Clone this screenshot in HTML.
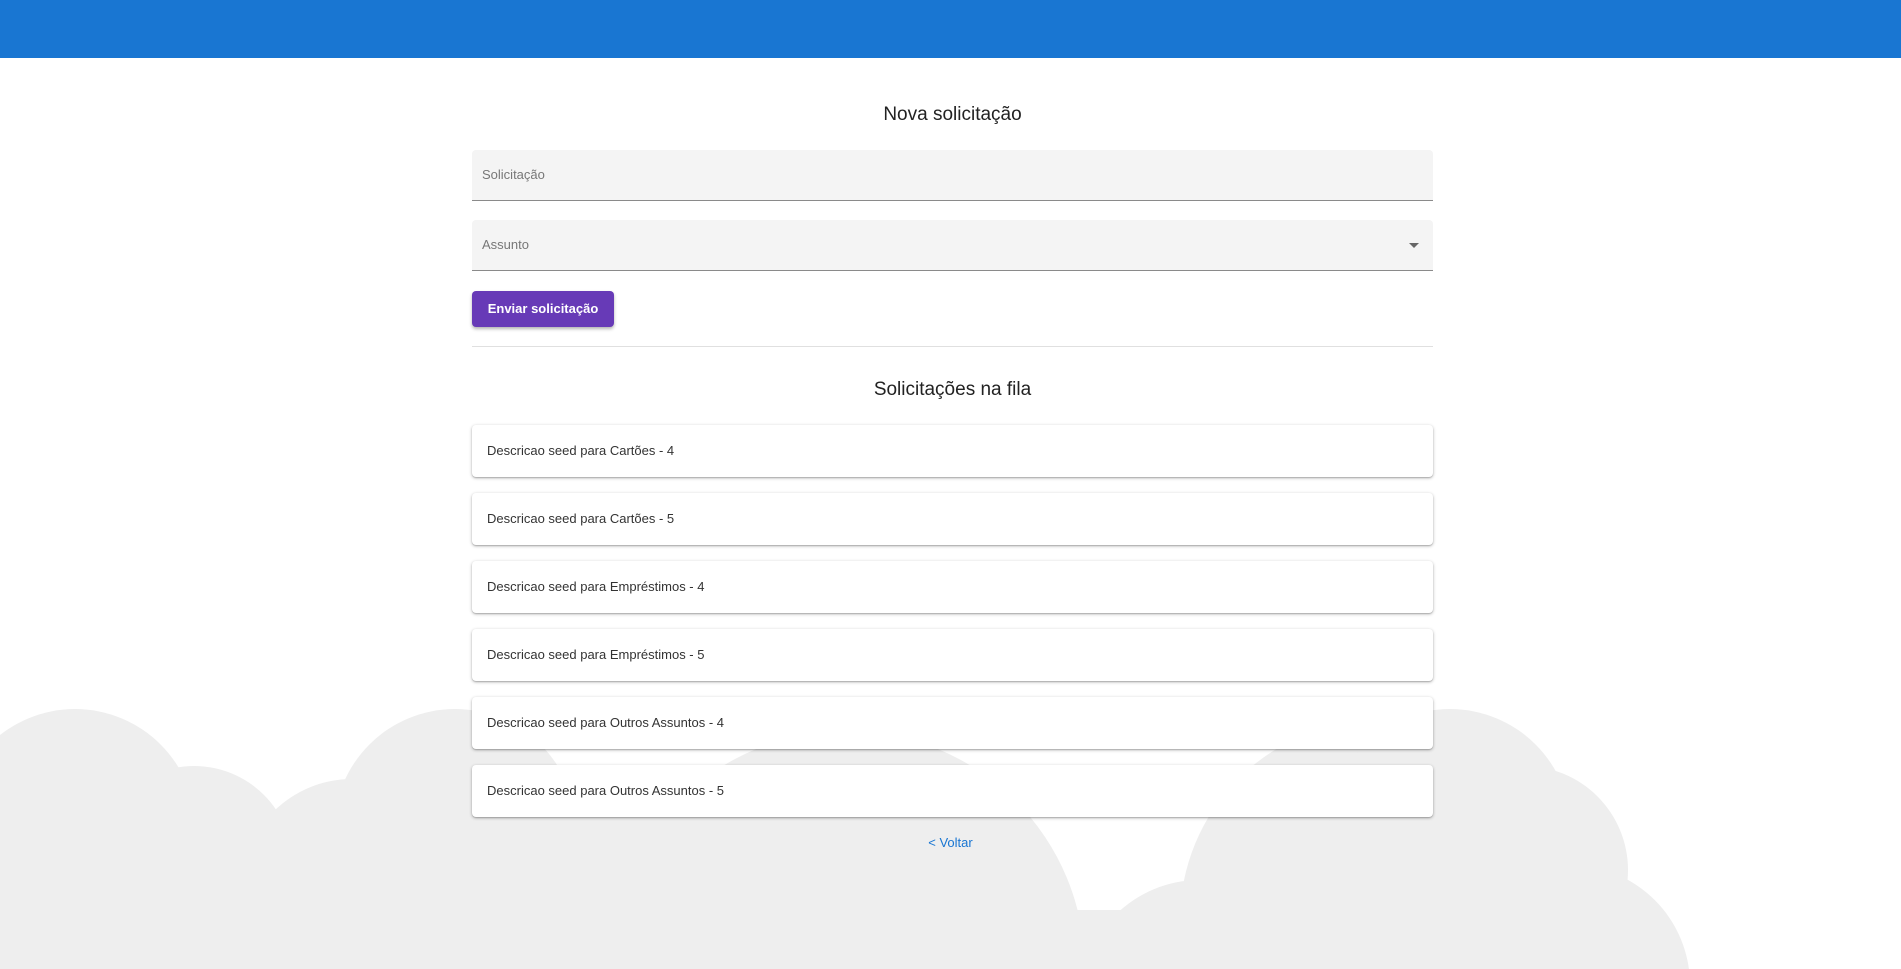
<!DOCTYPE html>
<html><head><meta charset="utf-8"><style>
*{box-sizing:border-box;margin:0;padding:0}
html,body{width:1901px;height:969px;overflow:hidden;background:#fff;font-family:"Liberation Sans",sans-serif;position:relative}
.hdr{position:absolute;left:0;top:0;width:1901px;height:58px;background:#1976d2}
svg.bg{position:absolute;left:0;top:0}
h2{position:absolute;left:472px;width:961px;text-align:center;font-weight:normal;font-size:19px;color:#222}
.field{position:absolute;left:472px;width:961px;height:51px;background:#f4f4f4;border-radius:4px 4px 0 0;border-bottom:1px solid #8a8a8a}
.field span{position:absolute;left:10px;top:17px;font-size:13px;color:#777}
.arrow{position:absolute;right:14px;top:23px;width:0;height:0;border-left:5px solid transparent;border-right:5px solid transparent;border-top:5px solid #666}
.btn{position:absolute;left:472px;top:291px;width:142px;height:36px;background:#673ab7;color:#fff;font-size:13px;font-weight:bold;border-radius:4px;box-shadow:0 2px 3px rgba(0,0,0,.3);text-align:center;line-height:36px}
.hr{position:absolute;left:472px;top:346px;width:961px;height:1px;background:#e0e0e0}
.card{position:absolute;left:472px;width:961px;height:52px;background:#fff;border-radius:4px;box-shadow:0 1px 3px rgba(0,0,0,.3),0 1px 1px rgba(0,0,0,.14);font-size:13px;color:#333;padding-left:15px;line-height:52px}
.back{position:absolute;left:0;width:1901px;text-align:center;top:835px;font-size:13px;color:#1976d2}
</style></head><body>
<svg class="bg" width="1901" height="969" viewBox="0 0 1901 969"><g fill="#eeeeee">
<circle cx="75" cy="830" r="121"/><circle cx="194" cy="865" r="99"/><circle cx="352" cy="890" r="111"/><circle cx="455" cy="830" r="121"/>
<circle cx="847" cy="969" r="238"/><circle cx="1200" cy="1000" r="120"/><circle cx="1380" cy="920" r="200"/><circle cx="1450" cy="830" r="121"/><circle cx="1524" cy="870" r="104"/><circle cx="1570" cy="985" r="120"/>
<rect x="0" y="910" width="1570" height="59"/><rect x="500" y="780" width="340" height="189"/>
</g></svg>
<div class="hdr"></div>
<h2 style="top:104px">Nova solicitação</h2>
<div class="field" style="top:150px"><span>Solicitação</span></div>
<div class="field" style="top:220px"><span>Assunto</span><div class="arrow"></div></div>
<div class="btn">Enviar solicitação</div>
<div class="hr"></div>
<h2 style="top:379px">Solicitações na fila</h2>
<div class="card" style="top:425px">Descricao seed para Cartões - 4</div>
<div class="card" style="top:493px">Descricao seed para Cartões - 5</div>
<div class="card" style="top:561px">Descricao seed para Empréstimos - 4</div>
<div class="card" style="top:629px">Descricao seed para Empréstimos - 5</div>
<div class="card" style="top:697px">Descricao seed para Outros Assuntos - 4</div>
<div class="card" style="top:765px">Descricao seed para Outros Assuntos - 5</div>
<div class="back">&lt; Voltar</div>
</body></html>
